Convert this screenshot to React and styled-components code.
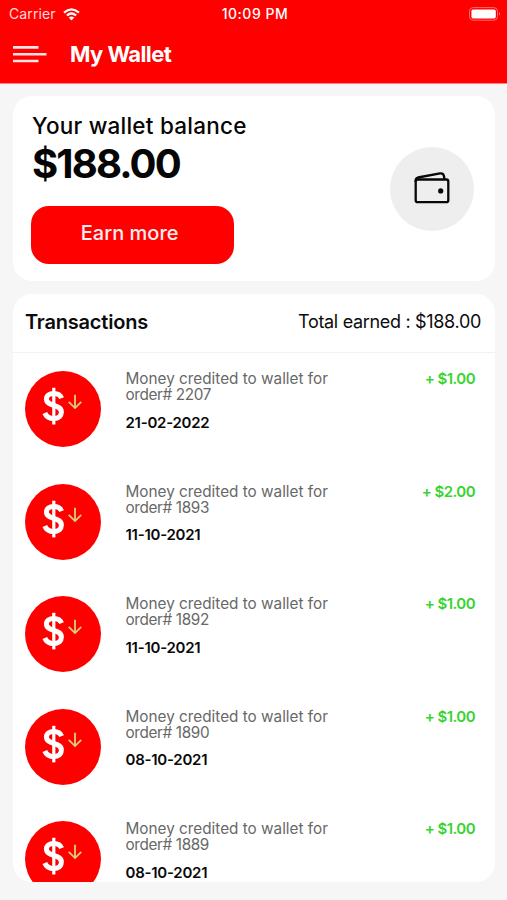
import React from "react";
import styled, { createGlobalStyle } from "styled-components";

const Global = createGlobalStyle`
  * { box-sizing: border-box; }
  html, body { margin: 0; padding: 0; background: #f6f6f6; }
  body { font-family: Inter, "Liberation Sans", sans-serif; overflow: hidden; }
`;

const Screen = styled.main`
  width: 507px;
  height: 900px;
  display: flex;
  flex-direction: column;
  background: #f6f6f6;
  overflow: hidden;
`;

const Header = styled.header`
  height: 84px;
  flex: none;
  background: #ff0000;
  color: #fff;
  border-bottom: 1px solid #ff8585;
`;

const StatusBar = styled.div`
  height: 28px;
  padding: 0 6px 0 9px;
  display: grid;
  grid-template-columns: 1fr auto 1fr;
  align-items: center;
`;

const Carrier = styled.div`
  display: flex;
  align-items: center;
  gap: 7px;
  color: #ffdcdc;
`;

const Battery = styled.svg`
  justify-self: end;
`;

const NavBar = styled.div`
  height: 55px;
  padding: 0 13px 3px;
  display: flex;
  align-items: center;
  gap: 23px;
`;

const Label = styled.span`
  display: block;
  white-space: nowrap;
  font-size: ${(p) => p.$size}px;
  line-height: ${(p) => p.$line}px;
  font-weight: ${(p) => p.$weight || 400};
  letter-spacing: ${(p) => p.$track || 0}px;
`;

const Card = styled.section`
  margin: 0 12px 0 13px;
  background: #fff;
  border-radius: 19px;
  overflow: hidden;
  flex: none;
`;

const BalanceCard = styled(Card)`
  margin-top: 12px;
  height: 185px;
  padding: 15px 21px 0 19px;
  display: flex;
  justify-content: space-between;
  color: #050505;
`;

const EarnButton = styled.button`
  display: flex;
  justify-content: center;
  width: 202.5px;
  height: 58px;
  margin: 18.6px 0 0 -0.6px;
  padding: 13px 6px 0 0;
  border: 0;
  border-radius: 18px;
  background: #ff0000;
  color: #ffeded;
  font-family: inherit;
`;

const WalletBadge = styled.div`
  width: 84px;
  height: 84px;
  margin-top: 36.4px;
  border-radius: 50%;
  background: #eee;
  display: flex;
  align-items: center;
  justify-content: center;
`;

const TransactionsCard = styled(Card)`
  margin-top: 13px;
  height: 588px;
`;

const ListHeader = styled.div`
  height: 59px;
  padding: 0 14px 2px 12px;
  display: flex;
  align-items: center;
  justify-content: space-between;
  color: #0c0c0c;
  border-bottom: 1px solid #f2f2f2;
`;

const Rows = styled.ul`
  list-style: none;
  margin: 0;
  padding: 18.4px 20px 0 12px;
`;

const Row = styled.li`
  height: 112.5px;
  display: flex;
`;

const CoinBadge = styled.div`
  width: 76px;
  height: 76px;
  flex: none;
  border-radius: 50%;
  background: #ff0000;
`;

const Details = styled.div`
  flex: 1;
  margin-left: 24.5px;
  color: #686868;
`;

const DateLine = styled.div`
  margin-top: 10.4px;
  color: #0a0a0a;
`;

const Amount = styled.div`
  color: #38d430;
`;

const transactions = [
  { order: 2207, date: "21-02-2022", amount: "+ $1.00" },
  { order: 1893, date: "11-10-2021", amount: "+ $2.00" },
  { order: 1892, date: "11-10-2021", amount: "+ $1.00" },
  { order: 1890, date: "08-10-2021", amount: "+ $1.00" },
  { order: 1889, date: "08-10-2021", amount: "+ $1.00" },
];

function WifiIcon() {
  return (
    <svg width="17" height="13" viewBox="0 0 17 13" fill="none" stroke="#fff" strokeWidth="2.2">
      <path d="M1 4.6Q8.5 -2 16 4.6" />
      <path d="M3.9 7.5Q8.5 3.5 13.1 7.5" />
      <path d="M8.5 12.4L5.7 9.6Q8.5 7.2 11.3 9.6Z" fill="#fff" stroke="none" />
    </svg>
  );
}

function BatteryIcon() {
  return (
    <Battery width="33" height="15" viewBox="0 0 33 15">
      <rect x="1.5" y="0.6" width="28" height="12.6" rx="3.6" fill="none" stroke="#ff6a6a" />
      <rect x="3.4" y="2.4" width="24.4" height="9" rx="1.6" fill="#fff" />
      <path d="M31 5.1Q33 6.9 31 8.6Z" fill="#ff8080" />
    </Battery>
  );
}

function MenuIcon() {
  return (
    <svg width="34" height="18" viewBox="0 0 34 18" stroke="#ffe4e4" strokeWidth="2.6">
      <path d="M0 2.4H25.5M0 9.2H33.5M0 16H25.5" />
    </svg>
  );
}

function WalletIcon() {
  return (
    <svg width="36" height="34" viewBox="0 0 36 34" fill="none" stroke="#080808" strokeWidth="2.3" strokeLinejoin="round">
      <rect x="1.7" y="7.5" width="32.6" height="22.7" rx="2" />
      <path d="M1.7 10V8Q1.8 6 4 5.5L26 1.4Q29.3 1 29.9 3.8L30.4 7" />
      <circle cx="26.7" cy="18.9" r="2.6" fill="#080808" stroke="none" />
    </svg>
  );
}

function CreditIcon() {
  return (
    <svg width="76" height="76" viewBox="0 0 76 76" fill="none">
      <path d="M28.8 16.8V53.4" stroke="#fff" strokeWidth="3.2" />
      <path d="M36.6 27.2C35.2 23.6 32.4 22.6 28.7 22.6C24.3 22.6 21.4 24.6 21.4 28.1C21.4 36 36.4 32.6 36.4 41C36.4 45 33.4 47.6 28.8 47.6C24.3 47.6 21.2 45.6 19.8 42" stroke="#fff" strokeWidth="5" />
      <path d="M50 23.8V36.8M43.7 30.8L50 37.1L56.3 30.8" stroke="#d9ce78" strokeWidth="1.8" />
    </svg>
  );
}

export default function App() {
  return (
    <Screen>
      <Global />
      <Header>
        <StatusBar>
          <Carrier>
            <Label $size={14} $line={18} $track={0.1}>Carrier</Label>
            <WifiIcon />
          </Carrier>
          <Label $size={14} $line={18} $weight={500} $track={0.5}>10:09 PM</Label>
          <BatteryIcon />
        </StatusBar>
        <NavBar>
          <MenuIcon />
          <Label $size={22} $line={28} $weight={700} $track={-0.6}>My Wallet</Label>
        </NavBar>
      </Header>
      <BalanceCard>
        <div>
          <Label $size={22.5} $line={29} $weight={500} $track={0.23}>Your wallet balance</Label>
          <Label $size={40} $line={47} $weight={700} $track={-1.85}>$188.00</Label>
          <EarnButton type="button">
            <Label $size={20} $line={28} $weight={500}>Earn more</Label>
          </EarnButton>
        </div>
        <WalletBadge><WalletIcon /></WalletBadge>
      </BalanceCard>
      <TransactionsCard>
        <ListHeader>
          <Label $size={20} $line={26} $weight={600} $track={-0.2}>Transactions</Label>
          <Label $size={18} $line={26} $track={-0.32}>Total earned : $188.00</Label>
        </ListHeader>
        <Rows>
          {transactions.map((t) => (
            <Row key={t.order}>
              <CoinBadge><CreditIcon /></CoinBadge>
              <Details>
                <Label $size={15.3} $line={16}>Money credited to wallet for</Label>
                <Label $size={15.3} $line={16} $track={-0.35}>order# {t.order}</Label>
                <DateLine>
                  <Label $size={15} $line={18} $weight={600} $track={-0.25}>{t.date}</Label>
                </DateLine>
              </Details>
              <Amount>
                <Label $size={15} $line={16} $weight={600} $track={-0.55}>{t.amount}</Label>
              </Amount>
            </Row>
          ))}
        </Rows>
      </TransactionsCard>
    </Screen>
  );
}
